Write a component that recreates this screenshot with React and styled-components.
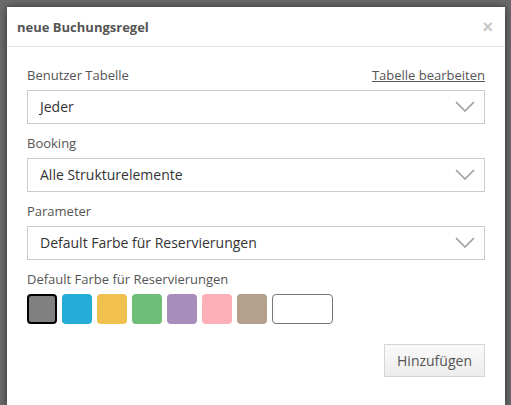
import React from "react";
import styled, { createGlobalStyle } from "styled-components";

const Global = createGlobalStyle`
  html, body { margin: 0; padding: 0; background: #6b6b6b; }
  body { font-family: "Open Sans", "Noto Sans", Arial, sans-serif; }
  * { box-sizing: border-box; }
`;

const Backdrop = styled.div`
  width: 511px;
  height: 405px;
  padding: 7px 6px 9px 7px;
  background: #6b6b6b;
`;

const Modal = styled.div`
  width: 498px;
  background: #fff;
  box-shadow: 0 0 8px rgba(0, 0, 0, 0.55);
  display: flex;
  flex-direction: column;
`;

const Header = styled.div`
  height: 40px;
  border-bottom: 1px solid #e5e5e5;
  display: flex;
  align-items: center;
  justify-content: space-between;
  padding: 0 12px 0 10px;
`;

const Title = styled.h4`
  margin: 0;
  font-size: 13px;
  font-weight: 700;
  color: #555;
`;

const Close = styled.button`
  border: 0;
  background: none;
  padding: 0;
  font-family: Arial, sans-serif;
  font-size: 18px;
  font-weight: 700;
  line-height: 1;
  color: #c8c8c8;
  cursor: pointer;
`;

const Body = styled.div`
  padding: 19px 20px 30px 20px;
  display: flex;
  flex-direction: column;
`;

const Field = styled.div`
  display: flex;
  flex-direction: column;
  gap: 6px;
  margin-bottom: ${(p) => (p.$last ? 10 : 10.5)}px;
`;

const LabelRow = styled.div`
  display: flex;
  justify-content: space-between;
  align-items: center;
  height: 18px;
`;

const Label = styled.label`
  font-size: 13px;
  color: #555;
  line-height: 18px;
`;

const Link = styled.a`
  font-size: 13px;
  color: #555;
  text-decoration: underline;
  line-height: 18px;
`;

const Select = styled.div`
  height: 33.5px;
  border: 1px solid #ccc;
  display: flex;
  align-items: center;
  justify-content: space-between;
  padding: 0 9px 0 12px;
  font-size: 14px;
  color: #333;
`;

const Swatches = styled.div`
  display: flex;
  gap: 5px;
`;

const Swatch = styled.div`
  width: ${(p) => (p.$wide ? 61 : 30)}px;
  height: 30px;
  border-radius: 4px;
  background: ${(p) => p.$color};
  border: ${(p) =>
    p.$selected ? "2px solid #000" : p.$wide ? "1.5px solid #777" : "none"};
`;

const Footer = styled.div`
  display: flex;
  justify-content: flex-end;
  margin-top: 10px;
`;

const Button = styled.button`
  width: 101px;
  height: 33px;
  border: 1px solid #d5d5d5;
  background: linear-gradient(#fafafa, #ececec);
  font-family: inherit;
  font-size: 14px;
  color: #555;
  padding: 0;
`;

const Chevron = () => (
  <svg width="20" height="11" viewBox="0 0 20 11">
    <path d="M1 1 L10 10 L19 1" fill="none" stroke="#9a9a9a" strokeWidth="1.5" />
  </svg>
);

const colors = ["#808080", "#23acd8", "#f0c14f", "#6ebd78", "#a98dbd", "#fcafb7", "#b4a08c"];

export default function App() {
  return (
    <>
      <Global />
      <Backdrop>
        <Modal>
          <Header>
            <Title>neue Buchungsregel</Title>
            <Close>×</Close>
          </Header>
          <Body>
            <Field>
              <LabelRow>
                <Label>Benutzer Tabelle</Label>
                <Link>Tabelle bearbeiten</Link>
              </LabelRow>
              <Select>
                Jeder
                <Chevron />
              </Select>
            </Field>
            <Field>
              <LabelRow>
                <Label>Booking</Label>
              </LabelRow>
              <Select>
                Alle Strukturelemente
                <Chevron />
              </Select>
            </Field>
            <Field>
              <LabelRow>
                <Label>Parameter</Label>
              </LabelRow>
              <Select>
                Default Farbe für Reservierungen
                <Chevron />
              </Select>
            </Field>
            <Field $last>
              <LabelRow>
                <Label>Default Farbe für Reservierungen</Label>
              </LabelRow>
              <Swatches>
                {colors.map((c, i) => (
                  <Swatch key={c} $color={c} $selected={i === 0} />
                ))}
                <Swatch $wide $color="#fff" />
              </Swatches>
            </Field>
            <Footer>
              <Button>Hinzufügen</Button>
            </Footer>
          </Body>
        </Modal>
      </Backdrop>
    </>
  );
}
